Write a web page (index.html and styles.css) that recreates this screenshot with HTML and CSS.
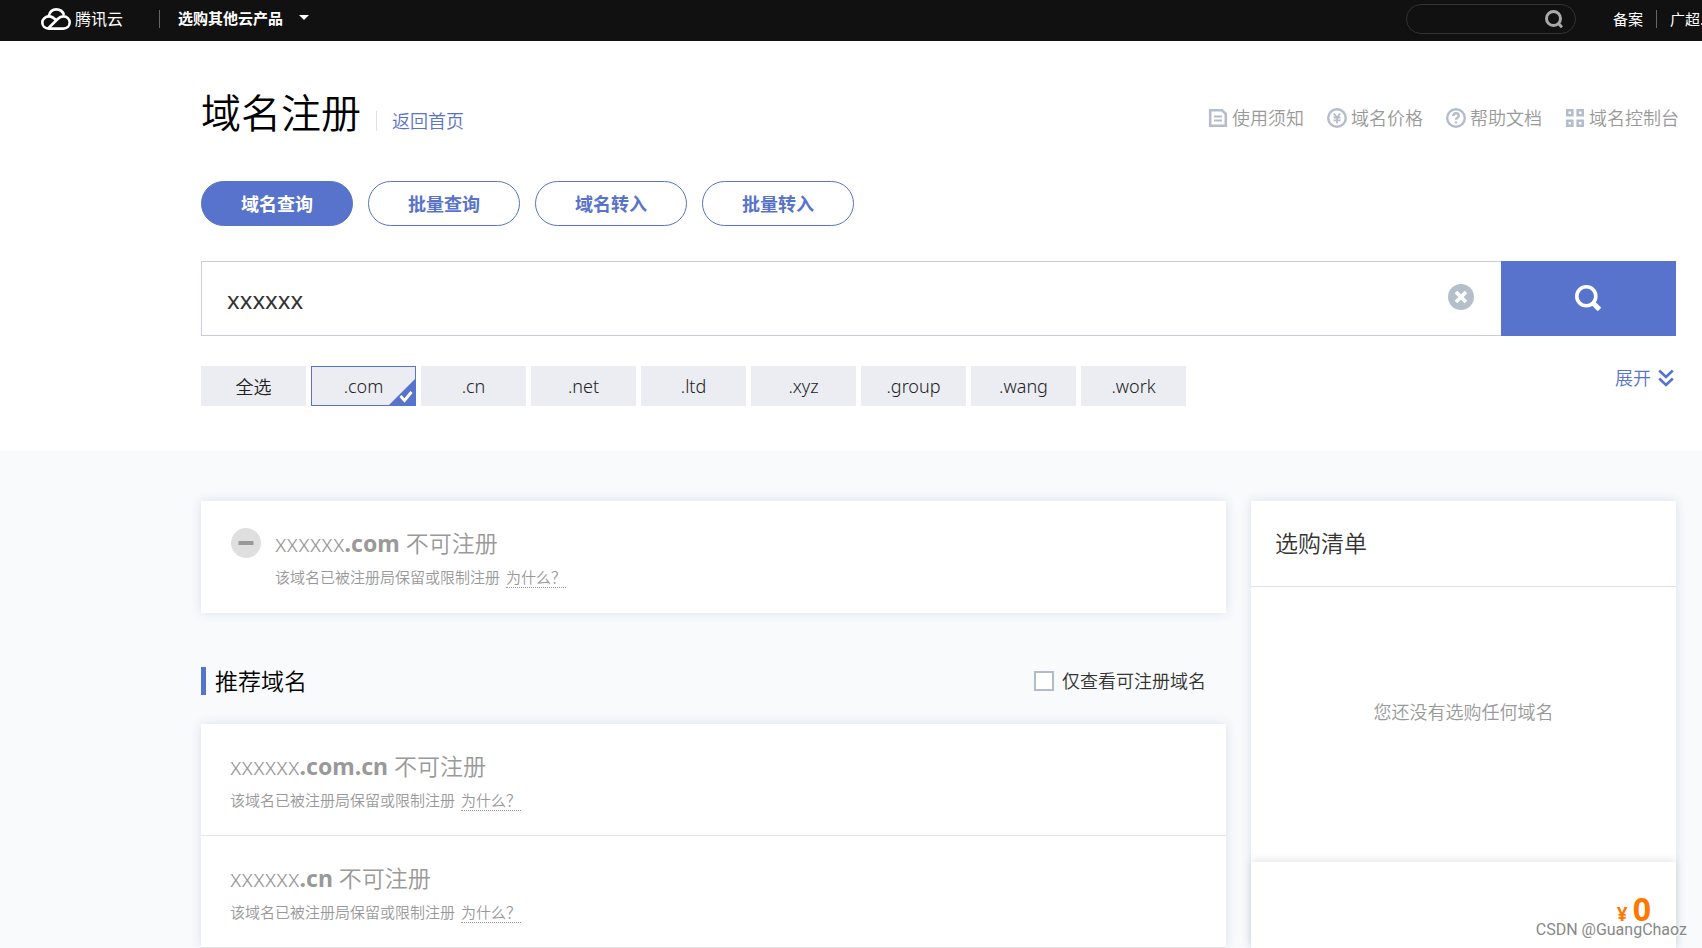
FILE: index.html
```html
<!DOCTYPE html>
<html lang="zh-CN">
<head>
<meta charset="utf-8">
<title>域名注册</title>
<link rel="stylesheet" href="styles.css">
</head>
<body>
<header class="topbar">
  <a class="logo" href="#">
    <svg class="logo-mark" viewBox="0 0 30 22" fill="none" stroke="#fff" stroke-width="2.6" stroke-linejoin="round">
      <path d="M7.6 8.3C8.6 4.100 11.600 1.400 15.300 1.400c3.700 0 6.600 2.300 7.700 5.600"/>
      <path d="M15.400 12.500C12.800 9.900 10.900 8.400 8.200 8.400c-3.900 0-6.900 2.700-6.900 6.100s2.700 6.100 6.500 6.100H22.200c3.800 0 6.500-2.700 6.500-6.100s-2.800-6.100-6.300-6.100c-2.300 0-4 .9-5.700 2.600L7.300 20.200"/>
    </svg>
    <span class="logo-text">腾讯云</span>
  </a>
  <span class="bar-line"></span>
  <button class="products" type="button">选购其他云产品<span class="caret"></span></button>
  <form class="top-search">
    <input class="top-input" type="text" aria-label="搜索">
    <button class="top-go" type="button" aria-label="搜索">
      <svg width="18" height="18" viewBox="0 0 18 18" fill="none" stroke="#a9a9a9" stroke-width="3"><circle cx="8.500" cy="8.500" r="7"/><path d="M13 13l4 4.300"/></svg>
    </button>
  </form>
  <nav class="user-nav">
    <a href="#">备案</a>
    <span class="bar-line"></span>
    <a href="#">广超...</a>
  </nav>
</header>

<section class="hero">
  <div class="title-row">
    <h1 class="page-title">域名注册</h1>
    <a class="back" href="#">返回首页</a>
    <nav class="help">
      <a href="#"><svg viewBox="0 0 20 20" fill="none" stroke="#b3bdcc" stroke-width="2.600"><path d="M2.200 2.200h11.800L17.800 6v11.800H2.200z"/><path d="M6 8.500h8M6 12.500h8" stroke-width="2.200"/></svg>使用须知</a>
      <a href="#"><svg viewBox="0 0 20 20" fill="none" stroke="#b3bdcc" stroke-width="2.400"><circle cx="10" cy="10" r="8.800"/><path d="M6.800 5.500L10 9.500l3.200-4M10 9.500v6M6.500 9.500h7M6.500 12.300h7" stroke-width="1.800"/></svg>域名价格</a>
      <a href="#"><svg viewBox="0 0 20 20" fill="none" stroke="#b3bdcc" stroke-width="2.400"><circle cx="10" cy="10" r="8.800"/><path d="M7.300 8c0-1.800 1.200-2.800 2.700-2.800s2.700 1 2.700 2.500c0 1.800-2.700 2-2.700 4.100M10 13.400v2.200"/></svg>帮助文档</a>
      <a href="#"><svg viewBox="0 0 20 20" fill="none" stroke="#b3bdcc" stroke-width="2.600"><path d="M2.300 2.300h5v5h-5zM12.700 2.300h5v5h-5zM2.300 12.700h5v5h-5zM12.700 12.700h5v5h-5z"/></svg>域名控制台</a>
    </nav>
  </div>

  <div class="tabs">
    <button class="tab tab-on" type="button">域名查询</button>
    <button class="tab" type="button">批量查询</button>
    <button class="tab" type="button">域名转入</button>
    <button class="tab" type="button">批量转入</button>
  </div>

  <form class="search">
    <div class="search-box">
      <input class="search-input" type="text" value="xxxxxx" aria-label="域名">
      <button class="clear" type="button" aria-label="清空">
        <svg width="26" height="26" viewBox="0 0 26 26"><circle cx="13" cy="13" r="13" fill="#b5bfcc"/><path d="M8 8l10 10M18 8L8 18" stroke="#fff" stroke-width="3.800"/></svg>
      </button>
    </div>
    <button class="search-go" type="button" aria-label="查询">
      <svg width="26" height="26" viewBox="0 0 26 26" fill="none" stroke="#fff"><circle cx="11.300" cy="11.300" r="9.500" stroke-width="3.600"/><path d="M18 18l6.500 6.500" stroke-width="5"/></svg>
    </button>
  </form>

  <div class="suffix-row">
    <div class="chips">
      <button class="chip" type="button">全选</button>
      <button class="chip chip-on" type="button">.com<svg class="chip-mark" viewBox="0 0 26 26"><path d="M26 0v26H0z" fill="#5773cb"/><path d="M11.500 17l4 4.500L22.500 13" fill="none" stroke="#fff" stroke-width="2.800"/></svg></button>
      <button class="chip" type="button">.cn</button>
      <button class="chip" type="button">.net</button>
      <button class="chip" type="button">.ltd</button>
      <button class="chip" type="button">.xyz</button>
      <button class="chip" type="button">.group</button>
      <button class="chip" type="button">.wang</button>
      <button class="chip" type="button">.work</button>
    </div>
    <button class="expand" type="button">展开<svg width="16" height="18" viewBox="0 0 16 18" fill="none" stroke="#5773cb" stroke-width="2.600"><path d="M1.200 1.500L8 8l6.800-6.500M1.200 9.500L8 16l6.800-6.500"/></svg></button>
  </div>
</section>

<main class="results">
  <div class="main-col">
    <article class="card item lead">
      <svg class="minus" viewBox="0 0 30 30"><circle cx="15" cy="15" r="15" fill="#dfdfdf"/><path d="M7.500 15h15" stroke="#999" stroke-width="4"/></svg>
      <div>
        <h2 class="domain">xxxxxx<b>.com</b> 不可注册</h2>
        <p class="reason">该域名已被注册局保留或限制注册 <a class="why" href="#">为什么？</a></p>
      </div>
    </article>

    <div class="section-head">
      <h2 class="section-title">推荐域名</h2>
      <label class="only"><input class="check" type="checkbox">仅查看可注册域名</label>
    </div>

    <div class="card">
      <article class="item row">
        <h3 class="domain">xxxxxx<b>.com.cn</b> 不可注册</h3>
        <p class="reason">该域名已被注册局保留或限制注册 <a class="why" href="#">为什么？</a></p>
      </article>
      <article class="item row">
        <h3 class="domain">xxxxxx<b>.cn</b> 不可注册</h3>
        <p class="reason">该域名已被注册局保留或限制注册 <a class="why" href="#">为什么？</a></p>
      </article>
    </div>
  </div>

  <aside class="card cart">
    <h2 class="cart-title">选购清单</h2>
    <p class="cart-empty">您还没有选购任何域名</p>
    <div class="cart-total"><span class="yen">¥</span><strong class="sum">0</strong></div>
  </aside>
</main>
<div class="watermark">CSDN @GuangChaoz</div>
</body>
</html>
```

FILE: styles.css
```css
* { box-sizing: border-box; }

body {
  margin: 0;
  min-height: 100vh;
  position: relative;
  display: flex;
  flex-direction: column;
  overflow-x: hidden;
  background: #f8fafc;
  color: #333;
  font-family: "Noto Sans", "Noto Sans CJK SC", sans-serif;
  font-size: 18px;
  font-weight: 350;
}

h1, h2, h3, p { margin: 0; font-weight: 350; }
b, strong { font-weight: 700; }
a { color: inherit; text-decoration: none; }
button, input { font: inherit; color: inherit; }
button { padding: 0; border: 0; background: none; cursor: pointer; }
svg { flex: none; }

/* top bar */
.topbar {
  display: flex;
  align-items: center;
  height: 41px;
  padding: 0 0 4px 41px;
  background: #111;
  color: #fff;
  font-size: 15px;
  font-weight: 400;
  white-space: nowrap;
  overflow: hidden;
}
.logo { display: flex; align-items: center; gap: 4px; margin-right: 36px; }
.logo-mark { width: 30px; height: 22px; }
.logo-text { font-size: 16px; line-height: 22px; }
.bar-line { width: 1px; height: 18px; background: #666; }
.products {
  display: flex;
  align-items: center;
  gap: 16px;
  margin-left: 18px;
  padding-bottom: 2px;
  font-weight: 700;
  line-height: 24px;
}
.caret { border: 5px solid transparent; border-top-color: #fff; border-bottom: 0; }
.top-search {
  display: flex;
  align-items: center;
  width: 170px;
  height: 30px;
  margin-left: auto;
  padding: 0 12px 0 16px;
  border: 1px solid #333;
  border-radius: 15px;
}
.top-input { flex: 1; min-width: 0; height: 24px; padding: 0; border: 0; outline: 0; background: none; }
.top-go { display: flex; }
.user-nav {
  display: flex;
  align-items: center;
  gap: 13px;
  width: 89px;
  margin-left: 37px;
  overflow: hidden;
  line-height: 20px;
}
.user-nav > * { flex: none; }

/* search area */
.hero { padding: 42px 26px 45px 201px; background: #fff; }
.title-row { display: flex; align-items: center; height: 62px; }
.page-title { padding-bottom: 2px; color: #000; font-size: 40px; line-height: 60px; }
.back {
  margin: 13px 0 0 15px;
  padding-left: 15px;
  border-left: 1px solid #dfe3ec;
  color: #5773cb;
  line-height: 20px;
}
.help {
  display: flex;
  gap: 23px;
  margin: 7px -3px 0 auto;
  color: #999;
  line-height: 24px;
}
.help a { display: flex; align-items: center; gap: 4px; }
.help svg { width: 20px; height: 20px; }

.tabs { display: flex; gap: 15px; margin-top: 36px; }
.tab {
  width: 152px;
  height: 45px;
  padding-bottom: 2px;
  border: 1px solid #5773cb;
  border-radius: 23px;
  color: #5773cb;
  font-weight: 700;
}
.tab-on { background: #5773cb; color: #fff; }

.search { display: flex; height: 75px; margin-top: 35px; }
.search-box {
  display: flex;
  flex: 1;
  align-items: center;
  padding: 0 27px 3px 25px;
  border: 1px solid #c9cbdc;
  border-right: 0;
}
.search-input {
  flex: 1;
  height: 60px;
  padding: 4px 0 0;
  border: 0;
  outline: 0;
  font-size: 24px;
  font-weight: 400;
}
.clear { display: flex; }
.search-go {
  display: flex;
  align-items: center;
  justify-content: center;
  width: 175px;
  padding: 0 2px 2px 0;
  background: #5773cb;
}

.suffix-row { display: flex; justify-content: space-between; align-items: flex-start; margin-top: 30px; }
.chips { display: flex; gap: 5px; }
.chip { position: relative; width: 105px; height: 40px; background: #ebedf2; color: #222; }
.chip-on { border: 1px solid #5773cb; }
.chip-mark { position: absolute; right: 0; bottom: 0; width: 26px; height: 26px; }
.expand { display: flex; align-items: center; gap: 7px; padding-right: 2px; color: #5773cb; line-height: 24px; }

/* results */
.results { display: flex; flex: 1; gap: 25px; padding: 50px 26px 0 201px; }
.main-col { flex: 1; }
.card { background: #fff; box-shadow: 0 0 10px rgba(70, 100, 160, .16); }
.item { height: 112px; padding: 25px 30px 0 29px; color: #999; }
.lead { display: flex; gap: 14px; padding-left: 30px; }
.minus { width: 30px; height: 30px; margin-top: 2px; }
.row { border-bottom: 1px solid #e5e5e5; }
.domain { font-size: 23px; line-height: 34px; }
.reason { font-size: 15px; line-height: 20px; margin-top: 7px; }
.why { display: inline-block; margin-left: 2px; border-bottom: 1px dotted #999; }
.section-head {
  display: flex;
  justify-content: space-between;
  align-items: center;
  height: 28px;
  margin: 54px 20px 29px 0;
}
.section-title {
  padding-left: 9px;
  border-left: 5px solid #5773cb;
  color: #000;
  font-size: 23px;
  line-height: 28px;
}
.only { display: flex; align-items: center; gap: 8px; line-height: 24px; }
.check { appearance: none; width: 20px; height: 20px; margin: 0; border: 2px solid #b0bccd; background: #fff; }

.cart { display: flex; flex-direction: column; width: 425px; }
.cart-title { padding: 26px 24px 27px; border-bottom: 1px solid #dfe1ec; font-size: 23px; line-height: 32px; }
.cart-empty { height: 275px; padding-top: 112px; color: #999; line-height: 26px; text-align: center; }
.cart-total {
  display: flex;
  flex: 1;
  justify-content: flex-end;
  align-items: baseline;
  gap: 5px;
  padding: 24px 25px 0;
  box-shadow: 0 -2px 8px rgba(0, 0, 0, .1);
  color: #ff7800;
  font-weight: 700;
  line-height: 46px;
}
.yen { font-size: 19px; }
.sum { font-size: 32px; }

.watermark {
  position: absolute;
  right: 15px;
  bottom: 8px;
  color: #888;
  font: 400 16px/20px Roboto, sans-serif;
  text-shadow: 1px 1px 1px #fff;
}
```
